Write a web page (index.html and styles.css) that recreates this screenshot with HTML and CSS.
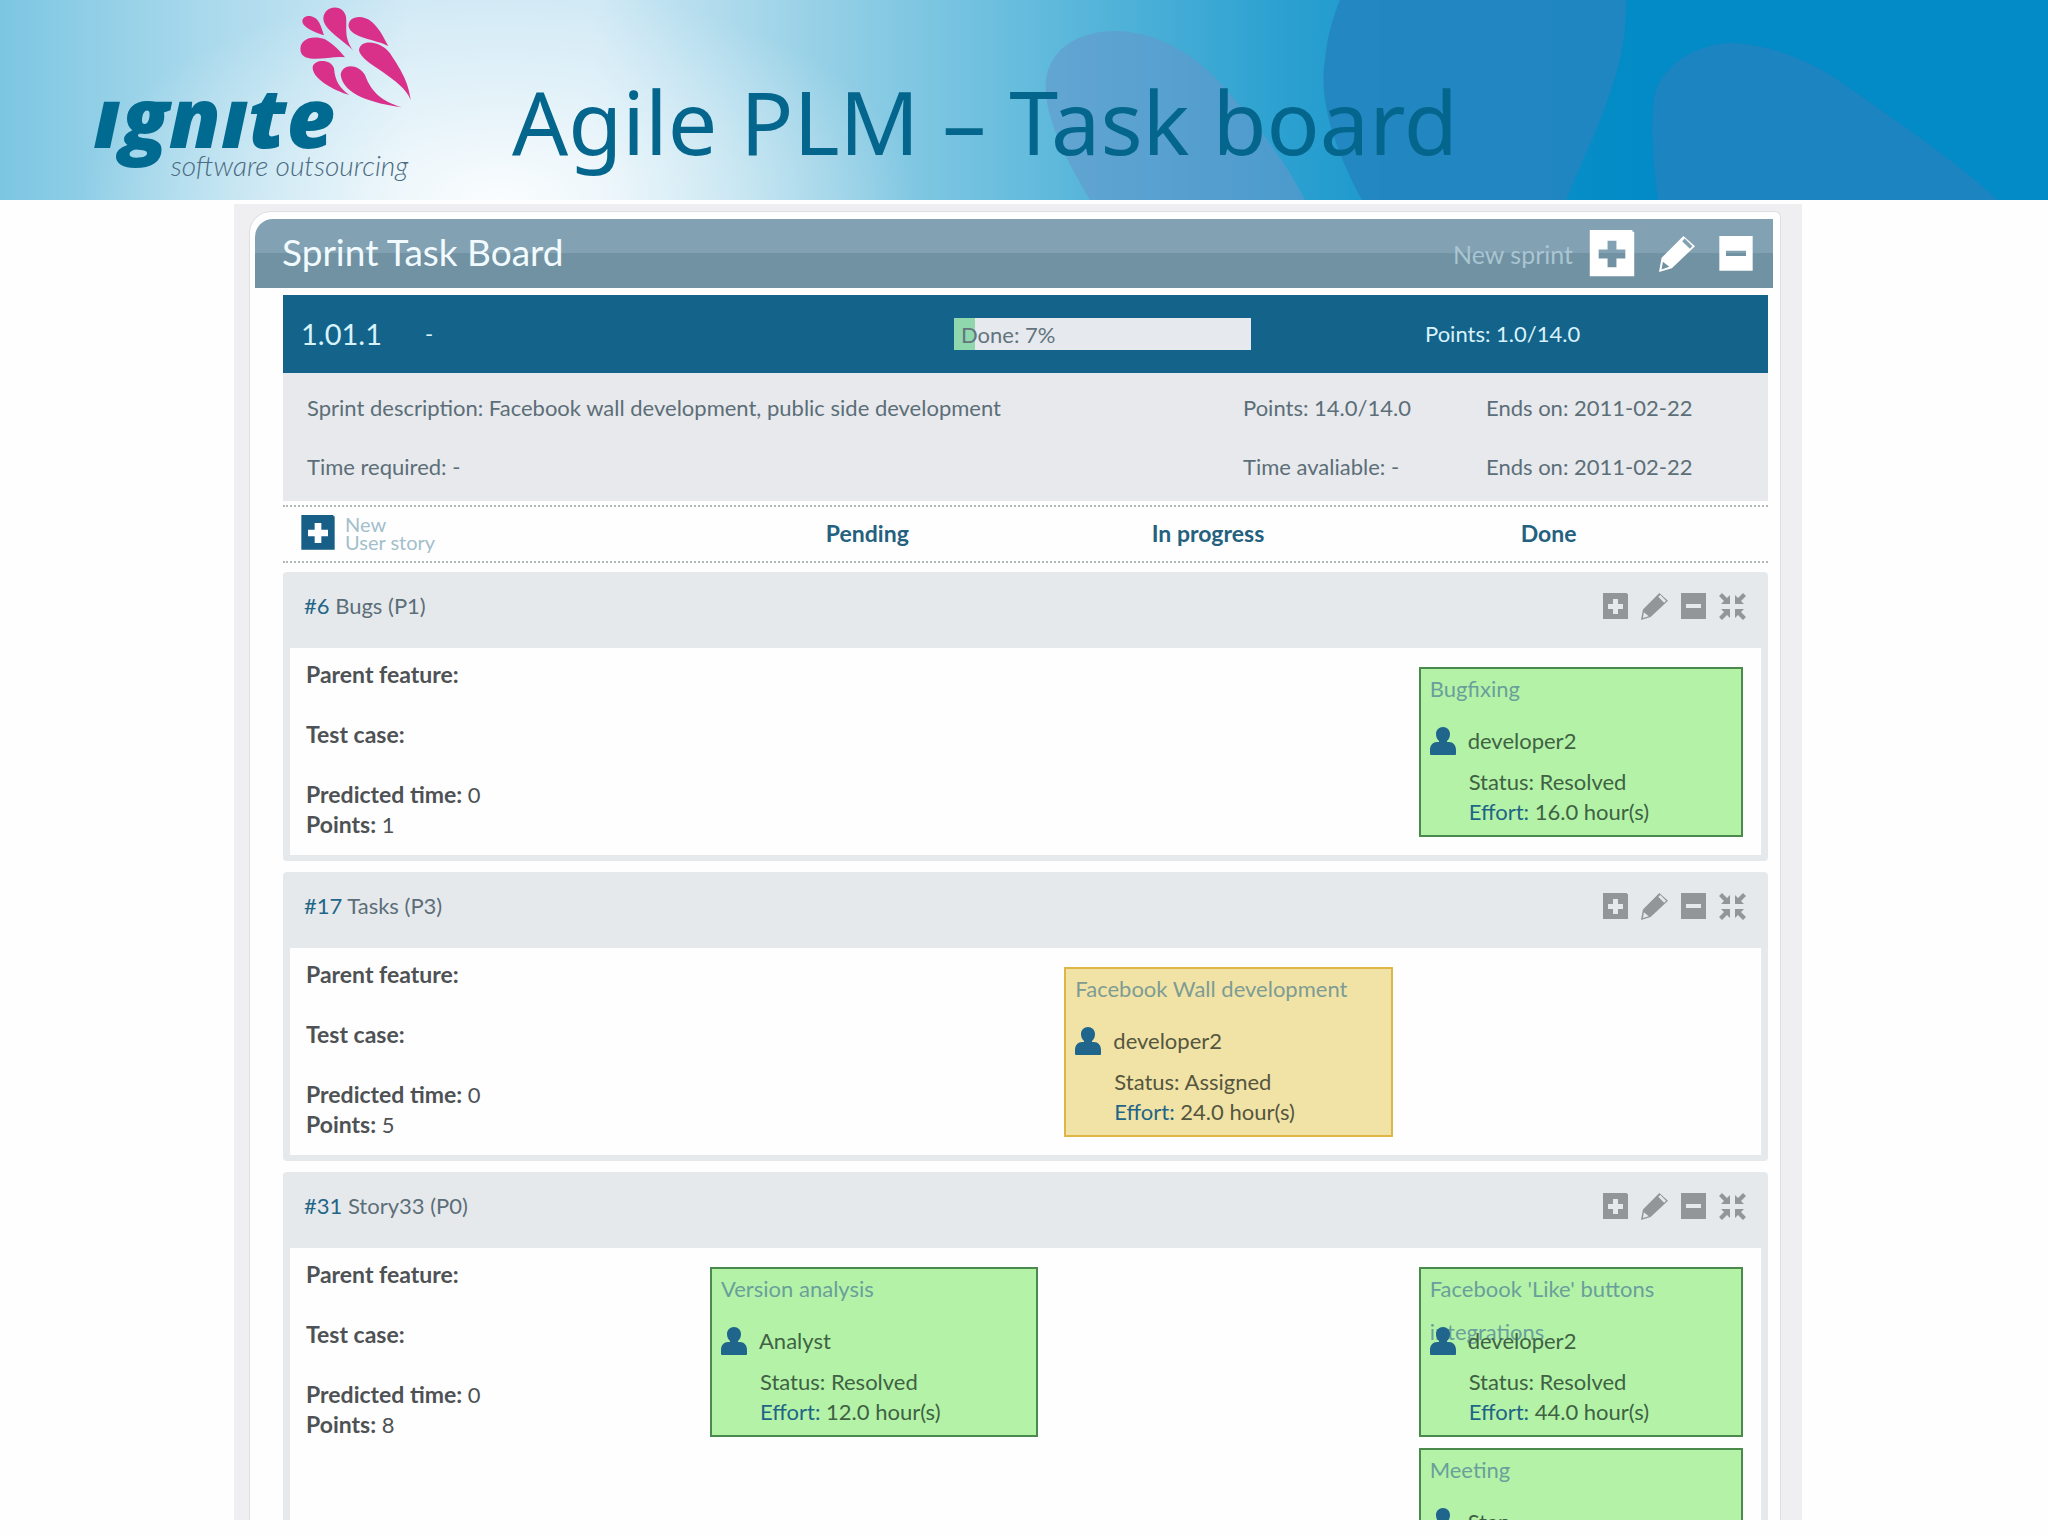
FILE: index.html
```html
<!DOCTYPE html>
<html lang="en">
<head>
    <meta charset="UTF-8">
    <meta name="viewport" content="width=device-width, initial-scale=1.0">
    <title>Agile PLM – Task board</title>
    <link rel="stylesheet" href="styles.css">
</head>
<body>
    <!-- Shared icons -->
    <svg class="sprite" aria-hidden="true">
        <symbol id="icon-plus" viewBox="0 0 27 27">
            <path fill-rule="evenodd" d="M2 0h23v1h1v25H1V0zM11 6v5H6v5h5v5h5v-5h5v-5h-5V6z"/>
        </symbol>
        <symbol id="icon-minus" viewBox="0 0 27 27">
            <path fill-rule="evenodd" d="M1 0h25v26H1zM6 11v4h15v-4z"/>
        </symbol>
        <symbol id="icon-pencil" viewBox="0 0 28 28">
            <path fill-rule="evenodd" d="M19 0l9 8L10 25 0 28l2-11zM18 4l6 6 2-2-6-6zM3 20l-1 6 6-2z"/>
        </symbol>
        <symbol id="icon-collapse" viewBox="0 0 27 27">
            <path d="M0 3l3-3 5 5 3-3v9H2l3-3zM27 3l-3-3-5 5-3-3v9h9l-3-3zM0 24l3 3 5-5 3 3v-9H2l3 3zM27 24l-3 3-5-5-3 3v-9h9l-3 3z"/>
        </symbol>
        <symbol id="icon-user" viewBox="0 0 26 28">
            <path d="M13 0c4 0 7 3 7 7 0 3-1 5-3 7v1h2c4 0 7 3 7 8v4c0 1-1 1-1 1H1c-1 0-1-1-1-1v-4c0-5 3-8 7-8h2v-1c-2-2-3-4-3-7 0-4 3-7 7-7z"/>
        </symbol>
    </svg>

    <header class="banner">
        <svg class="banner-bg" viewBox="0 0 2048 200" preserveAspectRatio="none" aria-hidden="true">
            <defs>
                <linearGradient id="sky">
                    <stop offset="0" stop-color="#7cc6e2"/>
                    <stop offset="0.1" stop-color="#a9d9ec"/>
                    <stop offset="0.2" stop-color="#d0e9f5"/>
                    <stop offset="0.29" stop-color="#d0e9f5"/>
                    <stop offset="0.4" stop-color="#96d0e6"/>
                    <stop offset="0.5" stop-color="#65bcdd"/>
                    <stop offset="0.62" stop-color="#2ea2d1"/>
                    <stop offset="0.72" stop-color="#0f90c9"/>
                    <stop offset="0.8" stop-color="#028bc6"/>
                    <stop offset="1" stop-color="#028bc6"/>
                </linearGradient>
                <radialGradient id="glow">
                    <stop offset="0" stop-color="#fff" stop-opacity="0.9"/>
                    <stop offset="0.4" stop-color="#fff" stop-opacity="0.5"/>
                    <stop offset="1" stop-color="#fff" stop-opacity="0"/>
                </radialGradient>
            </defs>
            <rect width="2048" height="200" fill="url(#sky)"/>
            <ellipse cx="500" cy="200" rx="420" ry="215" fill="url(#glow)"/>
            <path d="M1090 200C1060 150 1043 110 1046 80C1050 45 1085 30 1118 31C1160 33 1195 55 1222 85C1258 125 1285 160 1305 200Z" fill="#6498cb" opacity="0.6"/>
            <path d="M1362 200C1335 150 1318 100 1325 60C1327 35 1334 15 1340 0H1626C1628 70 1595 130 1566 200Z" fill="#2385c0" opacity="0.9"/>
            <path d="M1658 200C1652 160 1650 110 1656 90C1668 60 1700 43 1735 43C1780 46 1820 66 1852 90C1910 130 1960 165 1998 200Z" fill="#2182bf" opacity="0.85"/>
        </svg>
        <svg class="logo" viewBox="0 0 1200 600" role="img" aria-label="Ignite software outsourcing">
            <g fill="#d9308a">
                <path d="M792 106C760 95 725 80 727 62C730 42 765 42 778 68C785 82 788 95 792 106Z"/>
                <path d="M880 152C850 120 790 90 790 55C792 15 850 10 858 50C862 85 850 110 880 152Z"/>
                <path d="M985 138C950 118 875 115 866 80C862 50 905 40 935 65C960 88 970 110 985 138Z"/>
                <path d="M1052 300C1030 235 900 190 897 150C900 118 960 120 990 160C1030 220 1045 250 1052 300Z"/>
                <path d="M855 172C815 165 735 195 722 155C715 115 760 105 795 118C825 135 840 155 855 172Z"/>
                <path d="M868 285C820 270 755 235 758 200C765 175 815 178 822 205C825 245 840 265 868 285Z"/>
                <path d="M1025 322C940 310 850 285 842 225C845 190 895 190 915 225C935 280 970 305 1025 322Z"/>
            </g>
            <text class="logo-name" x="100" y="445">ıgnıte</text>
            <text class="logo-tagline" x="332" y="527">software outsourcing</text>
        </svg>
        <h1>Agile PLM – Task board</h1>
    </header>

    <main class="page">
        <div class="board">
            <div class="board-title">
                <h2>Sprint Task Board</h2>
                <div class="title-actions">
                    <span class="new-sprint">New sprint</span>
                    <button class="btn-large" aria-label="New sprint"><svg><use href="#icon-plus"/></svg></button>
                    <button aria-label="Edit sprint"><svg><use href="#icon-pencil"/></svg></button>
                    <button aria-label="Hide board"><svg><use href="#icon-minus"/></svg></button>
                </div>
            </div>

            <div class="sprint">
                <div class="sprint-bar">
                    <span class="sprint-id">1.01.1</span>
                    <span>-</span>
                    <div class="progress">
                        <div class="progress-fill" style="width: 7%"></div>
                        <span>Done: 7%</span>
                    </div>
                    <span>Points: 1.0/14.0</span>
                </div>
                <div class="sprint-info">
                    <span>Sprint description: Facebook wall development, public side development</span>
                    <span>Points: 14.0/14.0</span>
                    <span>Ends on: 2011-02-22</span>
                    <span>Time required: -</span>
                    <span>Time avaliable: -</span>
                    <span>Ends on: 2011-02-22</span>
                </div>

                <div class="columns">
                    <button class="new-story"><svg><use href="#icon-plus"/></svg><span>New<br>User story</span></button>
                    <h3>Pending</h3>
                    <h3>In progress</h3>
                    <h3>Done</h3>
                </div>

                <section class="story">
                    <div class="story-head">
                        <h4><a href="#">#6</a> Bugs (P1)</h4>
                        <div class="story-actions">
                            <button aria-label="Add task"><svg><use href="#icon-plus"/></svg></button>
                            <button aria-label="Edit story"><svg><use href="#icon-pencil"/></svg></button>
                            <button aria-label="Remove story"><svg><use href="#icon-minus"/></svg></button>
                            <button aria-label="Collapse story"><svg><use href="#icon-collapse"/></svg></button>
                        </div>
                    </div>
                    <div class="story-body">
                        <div class="meta">
                            <p><strong>Parent feature:</strong></p>
                            <p><strong>Test case:</strong></p>
                            <p><strong>Predicted time:</strong> 0<br><strong>Points:</strong> 1</p>
                        </div>
                        <div class="tasks"></div>
                        <div class="tasks"></div>
                        <div class="tasks">
                            <article class="task">
                                <a class="task-name" href="#">Bugfixing</a>
                                <div class="task-user"><svg><use href="#icon-user"/></svg>developer2</div>
                                <p>Status: Resolved</p>
                                <p><a href="#">Effort:</a> 16.0 hour(s)</p>
                            </article>
                        </div>
                    </div>
                </section>

                <section class="story">
                    <div class="story-head">
                        <h4><a href="#">#17</a> Tasks (P3)</h4>
                        <div class="story-actions">
                            <button aria-label="Add task"><svg><use href="#icon-plus"/></svg></button>
                            <button aria-label="Edit story"><svg><use href="#icon-pencil"/></svg></button>
                            <button aria-label="Remove story"><svg><use href="#icon-minus"/></svg></button>
                            <button aria-label="Collapse story"><svg><use href="#icon-collapse"/></svg></button>
                        </div>
                    </div>
                    <div class="story-body">
                        <div class="meta">
                            <p><strong>Parent feature:</strong></p>
                            <p><strong>Test case:</strong></p>
                            <p><strong>Predicted time:</strong> 0<br><strong>Points:</strong> 5</p>
                        </div>
                        <div class="tasks"></div>
                        <div class="tasks">
                            <article class="task assigned">
                                <a class="task-name" href="#">Facebook Wall development</a>
                                <div class="task-user"><svg><use href="#icon-user"/></svg>developer2</div>
                                <p>Status: Assigned</p>
                                <p><a href="#">Effort:</a> 24.0 hour(s)</p>
                            </article>
                        </div>
                        <div class="tasks"></div>
                    </div>
                </section>

                <section class="story">
                    <div class="story-head">
                        <h4><a href="#">#31</a> Story33 (P0)</h4>
                        <div class="story-actions">
                            <button aria-label="Add task"><svg><use href="#icon-plus"/></svg></button>
                            <button aria-label="Edit story"><svg><use href="#icon-pencil"/></svg></button>
                            <button aria-label="Remove story"><svg><use href="#icon-minus"/></svg></button>
                            <button aria-label="Collapse story"><svg><use href="#icon-collapse"/></svg></button>
                        </div>
                    </div>
                    <div class="story-body">
                        <div class="meta">
                            <p><strong>Parent feature:</strong></p>
                            <p><strong>Test case:</strong></p>
                            <p><strong>Predicted time:</strong> 0<br><strong>Points:</strong> 8</p>
                        </div>
                        <div class="tasks">
                            <article class="task">
                                <a class="task-name" href="#">Version analysis</a>
                                <div class="task-user"><svg><use href="#icon-user"/></svg>Analyst</div>
                                <p>Status: Resolved</p>
                                <p><a href="#">Effort:</a> 12.0 hour(s)</p>
                            </article>
                        </div>
                        <div class="tasks"></div>
                        <div class="tasks">
                            <article class="task">
                                <a class="task-name" href="#">Facebook 'Like' buttons integrations</a>
                                <div class="task-user"><svg><use href="#icon-user"/></svg>developer2</div>
                                <p>Status: Resolved</p>
                                <p><a href="#">Effort:</a> 44.0 hour(s)</p>
                            </article>
                            <article class="task">
                                <a class="task-name" href="#">Meeting</a>
                                <div class="task-user"><svg><use href="#icon-user"/></svg>Stan</div>
                            </article>
                        </div>
                    </div>
                </section>
            </div>
        </div>
    </main>
</body>
</html>
```
FILE: styles.css
```css
* {
    margin: 0;
    padding: 0;
    box-sizing: border-box;
}

body {
    font-family: Lato, 'Open Sans', sans-serif;
    font-size: 22px;
    line-height: 30px;
    color: #5c6e78;
    background: #fefefe;
    height: 100vh;
    padding-bottom: 16px;
    display: flex;
    flex-direction: column;
    overflow: hidden;
}

a {
    color: #1f6587;
    text-decoration: none;
}

button {
    border: 0;
    background: none;
    color: inherit;
    font: inherit;
    cursor: pointer;
}

svg {
    display: block;
    fill: currentColor;
}

.sprite {
    position: absolute;
    width: 0;
    height: 0;
}

/* Banner */
.banner {
    position: relative;
    display: flex;
    flex-shrink: 0;
    height: 200px;
    padding-left: 60px;
    gap: 52px;
}

.banner-bg {
    position: absolute;
    inset: 0;
    width: 100%;
    height: 100%;
    z-index: -1;
}

.logo {
    width: 400px;
    height: 200px;
}

.logo-name {
    font: italic 800 252px 'Open Sans', sans-serif;
    fill: #006a90;
}

.logo-tagline {
    font: italic 300 84px Lato, sans-serif;
    fill: #4b6b80;
}

.banner h1 {
    padding-top: 61px;
    font: 88px/120px 'Noto Sans', sans-serif;
    color: #04668c;
}

/* Board */
.page {
    flex: 1;
    min-height: 0;
    margin: 4px 246px 0 234px;
    padding: 7px 21px 0 15px;
    background: #efeff2;
    overflow: hidden;
}

.board {
    min-height: 100%;
    padding: 7px 7px 0 5px;
    border: 1px solid #dcdfe3;
    border-bottom: 0;
    border-radius: 22px 6px 0 0;
    background: #fefefe;
}

.board-title {
    display: flex;
    justify-content: space-between;
    align-items: center;
    height: 69px;
    padding: 0 19px 4px 27px;
    border-radius: 18px 0 0 0;
    background: linear-gradient(#82a1b2 50%, #7192a3 50%);
    color: #fff;
}

.board-title h2 {
    font-size: 37px;
    font-weight: normal;
    color: #f1fbff;
}

.title-actions {
    display: flex;
    align-items: center;
    gap: 23px;
    padding-top: 4px;
}

.title-actions svg {
    width: 36px;
    height: 36px;
}

.title-actions .btn-large svg {
    width: 48px;
    height: 48px;
}

.new-sprint {
    margin-right: -8px;
    font-size: 25px;
    color: #a9c5d2;
}

.sprint {
    margin: 7px 5px 0 28px;
}

.sprint-bar {
    display: grid;
    grid-template-columns: 124px 529fr 471fr 343fr;
    align-items: center;
    height: 78px;
    padding-left: 18px;
    background: #13638a;
    color: #d8f2fb;
}

.sprint-id {
    font-size: 29px;
}

.progress {
    position: relative;
    width: 297px;
    height: 32px;
    padding-left: 7px;
    line-height: 34px;
    background: #e6e9ed;
    color: #64747d;
}

.progress-fill {
    position: absolute;
    inset: 0 auto 0 0;
    background: #8fd8ad;
}

.progress span {
    position: relative;
}

.sprint-info {
    display: grid;
    grid-template-columns: 936fr 243fr 282fr;
    row-gap: 29px;
    padding: 20px 0 19px 24px;
    background: #e7e9ec;
}

.columns {
    display: grid;
    grid-template-columns: 414px 1fr 1fr 1fr;
    align-items: center;
    height: 58px;
    margin: 4px 0 9px;
    padding: 0 49px 2px 0;
    border: 2px dotted #b3b8ba;
    border-width: 2px 0;
}

.columns h3 {
    font-size: 23px;
    text-align: center;
    color: #24617f;
}

.new-story {
    display: flex;
    align-items: center;
    gap: 9px;
    padding-left: 17px;
    font-size: 20px;
    line-height: 18px;
    text-align: left;
    color: #a3bfcc;
}

.new-story svg {
    width: 36px;
    height: 36px;
    color: #175f86;
}

/* Stories */
.story {
    margin-bottom: 11px;
    padding: 0 7px 6px;
    border-radius: 4px;
    background: #e6e9ec;
}

.story-head {
    display: flex;
    justify-content: space-between;
    align-items: center;
    height: 76px;
    padding: 0 15px 8px 14px;
}

.story-head h4 {
    font-size: 22px;
    font-weight: normal;
}

.story-actions {
    display: flex;
    gap: 12px;
    color: #939699;
}

.story-actions svg {
    width: 27px;
    height: 27px;
}

.story-body {
    display: grid;
    grid-template-columns: 394px 328fr 328fr 324fr;
    column-gap: 26px;
    padding: 19px 18px 18px 0;
    background: #fefefe;
}

.meta {
    margin: -7px 0 -4px;
    padding-left: 16px;
    color: #4e5254;
}

.meta strong {
    font-size: 23px;
    line-height: 1;
}

.meta p + p {
    margin-top: 30px;
}

.tasks {
    display: flex;
    flex-direction: column;
    gap: 11px;
}

.task {
    height: 170px;
    padding: 0 9px;
    border: 2px solid #4a8a4c;
    background: #b4f3a7;
    color: #3f6244;
}

.task.assigned {
    border-color: #dfb545;
    background: #f1e3a6;
    color: #55563f;
}

/* Long names run on below the first line, under the user */
.task-name {
    display: block;
    height: 47px;
    margin-top: -2px;
    line-height: 43px;
    color: #6a9f9b;
}

.task.assigned .task-name {
    color: #7e9c93;
}

.task-user {
    position: relative;
    display: flex;
    align-items: center;
    gap: 12px;
    height: 53px;
}

.task-user svg {
    width: 26px;
    height: 28px;
    color: #20658c;
}

.task p {
    padding-left: 39px;
}
```
